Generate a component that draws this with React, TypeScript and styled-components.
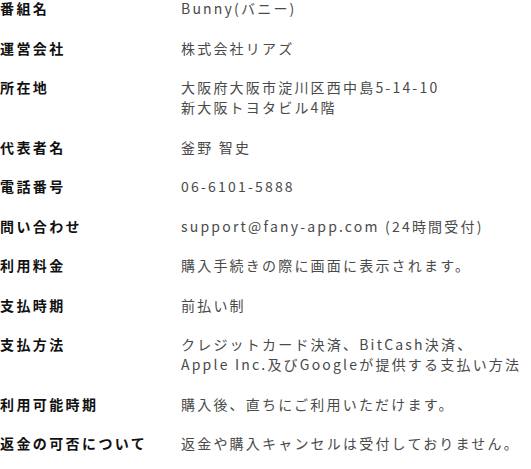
import React from "react";
import styled, { createGlobalStyle } from "styled-components";

const Global = createGlobalStyle`
  html, body { margin: 0; padding: 0; background: #fff; }
  body { font-family: "Noto Sans CJK JP", "DejaVu Sans", sans-serif; }
`;

const List = styled.dl`
  margin: -2px 0 0;
  display: grid;
  grid-template-columns: 181px 1fr;
  row-gap: 19.5px;
`;

const Label = styled.dt`
  margin: 0;
  font-size: 14px;
  line-height: 20px;
  font-weight: bold;
  letter-spacing: 2.4px;
  color: #111;
  white-space: nowrap;
`;

const Value = styled.dd`
  margin: 0;
  font-size: 14px;
  line-height: 20px;
  letter-spacing: 2.2px;
  color: #4a4a4a;
  white-space: nowrap;
`;

const rows: [string, string[]][] = [
  ["番組名", ["Bunny(バニー)"]],
  ["運営会社", ["株式会社リアズ"]],
  ["所在地", ["大阪府大阪市淀川区西中島5-14-10", "新大阪トヨタビル4階"]],
  ["代表者名", ["釜野 智史"]],
  ["電話番号", ["06-6101-5888"]],
  ["問い合わせ", ["support@fany-app.com (24時間受付)"]],
  ["利用料金", ["購入手続きの際に画面に表示されます。"]],
  ["支払時期", ["前払い制"]],
  ["支払方法", ["クレジットカード決済、BitCash決済、", "Apple Inc.及びGoogleが提供する支払い方法"]],
  ["利用可能時期", ["購入後、直ちにご利用いただけます。"]],
  ["返金の可否について", ["返金や購入キャンセルは受付しておりません。"]],
];

export default function App() {
  return (
    <>
      <Global />
      <List>
        {rows.map(([label, lines]) => (
          <React.Fragment key={label}>
            <Label>{label}</Label>
            <Value>
              {lines.map((l, i) => (
                <React.Fragment key={i}>
                  {i > 0 && <br />}
                  {l}
                </React.Fragment>
              ))}
            </Value>
          </React.Fragment>
        ))}
      </List>
    </>
  );
}
